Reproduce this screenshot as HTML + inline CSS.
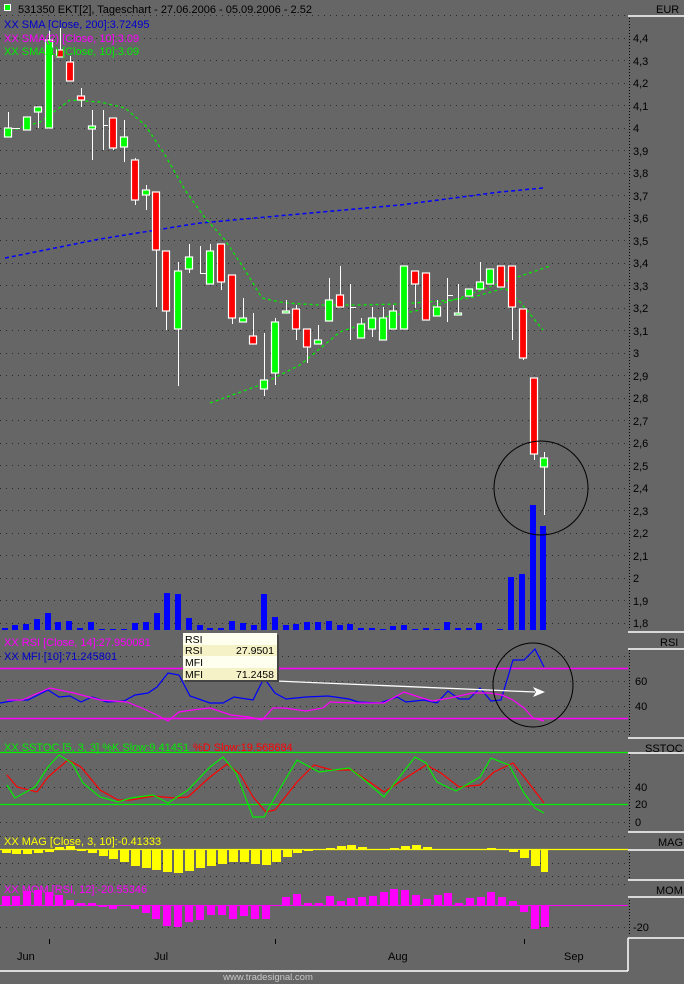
<!DOCTYPE html>
<html><head><meta charset="utf-8"><style>
html,body{margin:0;padding:0;background:#666;}
svg{display:block;font-family:"Liberation Sans",sans-serif;font-size:11px;}
</style></head><body>
<svg width="684" height="984" viewBox="0 0 684 984" xmlns="http://www.w3.org/2000/svg">
<rect width="684" height="984" fill="#666"/>
<g stroke="#2a2a2a" stroke-width="1" stroke-dasharray="1,5">
<path d="M0 15.5H628M0 38.5H628M0 60.5H628M0 83.5H628M0 105.5H628M0 128.5H628M0 150.5H628M0 173.5H628M0 195.5H628M0 218.5H628M0 240.5H628M0 263.5H628M0 285.5H628M0 308.5H628M0 330.5H628M0 353.5H628M0 375.5H628M0 398.5H628M0 420.5H628M0 443.5H628M0 465.5H628M0 488.5H628M0 510.5H628M0 533.5H628M0 555.5H628M0 578.5H628M0 600.5H628M0 623.5H628"/>
<path d="M0 656.5H628M0 681.5H628M0 706.5H628M0 731.5H628"/>
<path d="M0 769.5H628M0 787.5H628M0 822.5H628"/>
<path d="M0 836.5H628M0 863.5H628M0 876.5H628"/>
<path d="M0 884.5H628M0 927.5H628"/>
</g>
<g stroke="#000" stroke-dasharray="1,2"><path d="M629.5 18V630M629.5 650V736M629.5 754V830M629.5 850V878M629.5 897V936"/></g>
<g fill="#000">
<text x="656" y="13">EUR</text>
<text x="633" y="42">4,4</text><text x="633" y="65">4,3</text><text x="633" y="87">4,2</text><text x="633" y="110">4,1</text><text x="633" y="132">4</text><text x="633" y="155">3,9</text><text x="633" y="177">3,8</text><text x="633" y="200">3,7</text><text x="633" y="222">3,6</text><text x="633" y="245">3,5</text><text x="633" y="267">3,4</text><text x="633" y="290">3,3</text><text x="633" y="312">3,2</text><text x="633" y="335">3,1</text><text x="633" y="357">3</text><text x="633" y="380">2,9</text><text x="633" y="402">2,8</text><text x="633" y="425">2,7</text><text x="633" y="447">2,6</text><text x="633" y="470">2,5</text><text x="633" y="492">2,4</text><text x="633" y="515">2,3</text><text x="633" y="537">2,2</text><text x="633" y="560">2,1</text><text x="633" y="582">2</text><text x="633" y="605">1,9</text><text x="633" y="627">1,8</text>
<text x="660" y="646">RSI</text><text x="635" y="685">60</text><text x="635" y="710">40</text>
<text x="645" y="752">SSTOC</text><text x="635" y="791">40</text><text x="635" y="808">20</text><text x="635" y="826">0</text>
<text x="658" y="846">MAG</text>
<text x="656" y="894">MOM</text><text x="633" y="931">-20</text>
</g>
<g stroke="#fff" stroke-width="1.5"><path d="M628 16H684M628 632H684M628 649H684M628 738H684M628 753H684M628 832H684M628 850H684M628 880H684M628 897H684M628 938H684M0 971H628M628 938V971"/></g>
<g fill="#0000ff">
<rect x="2" y="628" width="6" height="2"/><rect x="12" y="625" width="6" height="5"/><rect x="23" y="624" width="6" height="6"/><rect x="34" y="619" width="6" height="11"/><rect x="45" y="613" width="6" height="17"/><rect x="55" y="622" width="6" height="8"/><rect x="66" y="621" width="6" height="9"/><rect x="77" y="628" width="6" height="2"/><rect x="88" y="622" width="6" height="8"/><rect x="99" y="629" width="6" height="1"/><rect x="110" y="629" width="6" height="1"/><rect x="121" y="629" width="6" height="1"/><rect x="132" y="623" width="6" height="7"/><rect x="143" y="622" width="6" height="8"/><rect x="154" y="613" width="6" height="17"/><rect x="164" y="593" width="6" height="37"/><rect x="175" y="594" width="6" height="36"/><rect x="186" y="618" width="6" height="12"/><rect x="197" y="625" width="6" height="5"/><rect x="207" y="628" width="6" height="2"/><rect x="218" y="628" width="6" height="2"/><rect x="229" y="621" width="6" height="9"/><rect x="240" y="623" width="6" height="7"/><rect x="251" y="625" width="6" height="5"/><rect x="261" y="594" width="6" height="36"/><rect x="272" y="617" width="6" height="13"/><rect x="283" y="625" width="6" height="5"/><rect x="293" y="624" width="6" height="6"/><rect x="304" y="622" width="6" height="8"/><rect x="315" y="622" width="6" height="8"/><rect x="326" y="621" width="6" height="9"/><rect x="337" y="625" width="6" height="5"/><rect x="347" y="624" width="6" height="6"/><rect x="358" y="628" width="6" height="2"/><rect x="369" y="628" width="6" height="2"/><rect x="380" y="629" width="6" height="1"/><rect x="390" y="626" width="6" height="4"/><rect x="401" y="625" width="6" height="5"/><rect x="412" y="629" width="6" height="1"/><rect x="423" y="628" width="6" height="2"/><rect x="434" y="629" width="6" height="1"/><rect x="444" y="622" width="6" height="8"/><rect x="455" y="628" width="6" height="2"/><rect x="466" y="628" width="6" height="2"/><rect x="476" y="623" width="6" height="7"/><rect x="497" y="629" width="6" height="1"/><rect x="508" y="577" width="6" height="53"/><rect x="519" y="574" width="6" height="56"/><rect x="530" y="505" width="6" height="125"/><rect x="540" y="526" width="6" height="104"/>
</g>
<path d="M5 258 L100 239 L200 223 L300 214 L400 205 L500 192 L543 188" stroke="#0000ff" stroke-width="1.5" stroke-dasharray="4,3" fill="none"/>
<path d="M10 131 L40 122 L70 100 L100 102 L125 108 L145 125 L165 155 L185 190 L205 218 L225 240 L245 270 L262 298 L285 303 L320 305 L360 305 L400 304 L440 301 L470 298 L505 288 L520 302 L543 330" stroke="#00ee00" stroke-width="1.3" stroke-dasharray="3,3" fill="none"/>
<path d="M210 403 L260 385 L300 365 L340 332 L380 318 L420 310 L460 298 L500 283 L550 266" stroke="#00ee00" stroke-width="1.3" stroke-dasharray="3,3" fill="none"/>
<g stroke="#fff" stroke-width="1">
<path d="M8.5 112V137M27.5 117V130M38.5 107V128M49.5 28V128M60.5 28V57M70.5 56V81M81.5 88V107M92.5 110V160M103.5 110V150M113.5 118V150M124.5 120V162M135.5 158V205M146.5 185V210M156.5 192V307M166.5 251V330M178.5 262V386M189.5 244V273M200.5 246V273M210.5 244V284M221.5 244V290M232.5 275V324M243.5 298V322M253.5 313V344M264.5 333V396M275.5 318V385M286.5 300V313M296.5 305V340M307.5 329V363M318.5 325V344M329.5 278V321M340.5 266V307M350.5 284V340M361.5 318V338M372.5 307V337M383.5 307V340M393.5 305V329M404.5 266V329M415.5 271V308M426.5 273V320M437.5 300V316M447.5 278V322M458.5 284V315M469.5 289V296M480.5 262V289M490.5 269V284M501.5 266V287M512.5 266V340M523.5 309V360M534.5 378V460M544.5 452V515"/>
<path d="M12 128.5H20M200 273.5H206M350 307.5H356M447 295.5H453M103 125.5H108" />
</g>
<g stroke="#fff" stroke-width="1.2">
<g fill="#00ff00">
<rect x="4.5" y="128" width="7" height="9"/><rect x="23.5" y="117" width="7" height="13"/><rect x="34.5" y="107" width="7" height="5"/><rect x="45.5" y="40" width="7" height="88"/><rect x="88.5" y="126" width="7" height="3"/><rect x="120.5" y="137" width="7" height="10"/><rect x="142.5" y="190" width="7" height="5"/><rect x="174.5" y="271" width="7" height="58"/><rect x="185.5" y="257" width="7" height="12"/><rect x="206.5" y="251" width="7" height="33"/><rect x="239.5" y="318" width="7" height="4"/><rect x="260.5" y="380" width="7" height="9"/><rect x="271.5" y="322" width="7" height="51"/><rect x="282.5" y="311" width="7" height="2"/><rect x="314.5" y="340" width="7" height="4"/><rect x="325.5" y="300" width="7" height="21"/><rect x="357.5" y="324" width="7" height="14"/><rect x="368.5" y="318" width="7" height="11"/><rect x="379.5" y="318" width="7" height="22"/><rect x="389.5" y="311" width="7" height="18"/><rect x="400.5" y="266" width="7" height="63"/><rect x="433.5" y="307" width="7" height="9"/><rect x="454.5" y="313" width="7" height="2"/><rect x="465.5" y="289" width="7" height="7"/><rect x="476.5" y="282" width="7" height="7"/><rect x="486.5" y="269" width="7" height="15"/><rect x="540.5" y="458" width="7" height="9"/>
</g>
<g fill="#ff0000">
<rect x="56.5" y="50" width="7" height="7"/><rect x="66.5" y="62" width="7" height="19"/><rect x="77.5" y="96" width="7" height="4"/><rect x="109.5" y="118" width="7" height="30"/><rect x="131.5" y="160" width="7" height="40"/><rect x="152.5" y="192" width="7" height="58"/><rect x="162.5" y="251" width="7" height="60"/><rect x="217.5" y="244" width="7" height="38"/><rect x="228.5" y="275" width="7" height="43"/><rect x="249.5" y="336" width="7" height="8"/><rect x="292.5" y="309" width="7" height="20"/><rect x="303.5" y="329" width="7" height="18"/><rect x="336.5" y="295" width="7" height="12"/><rect x="411.5" y="271" width="7" height="13"/><rect x="422.5" y="273" width="7" height="47"/><rect x="497.5" y="266" width="7" height="21"/><rect x="508.5" y="266" width="7" height="41"/><rect x="519.5" y="309" width="7" height="49"/><rect x="530.5" y="378" width="7" height="76"/>
</g>
</g>
<ellipse cx="541" cy="488" rx="47" ry="47" stroke="#000" fill="none" stroke-width="1"/>
<rect x="4.5" y="4.5" width="6" height="6" fill="#00ff00" stroke="#fff"/>
<text x="18" y="13" fill="#000">531350  EKT[2], Tageschart - 27.06.2006 - 05.09.2006 - 2.52</text>
<text x="4" y="28" fill="#0000cc">XX SMA [Close, 200]:3.72495</text>
<text x="4" y="42" fill="#ff00ff">XX SMA(2) [Close, 10]:3.09</text>
<text x="4" y="55" fill="#00ee00">XX SMA(1) [Close, 10]:3.09</text>
<path d="M0 668.5H628M0 718.5H628" stroke="#ff00ff" stroke-width="1.5"/>
<polyline fill="none" stroke="#0000ff" stroke-width="1.2" points="0,703 17,700 28,700 48,690 59,697 70,696 81,702 92,697 107,702 124,701 135,695 148,693 157,687 168,673 179,675 190,696 210,703 223,703 234,697 253,700 264,678 275,693 286,699 306,697 328,696 349,699 358,702 380,703 397,697 406,702 424,700 437,703 448,691 459,699 469,699 480,688 491,701 501,700 513,660 524,660 535,649 544,667"/>
<polyline fill="none" stroke="#ff00ff" stroke-width="1.2" points="7,700 22,700 50,688 74,693 100,700 127,702 144,709 157,715 168,721 179,712 192,710 210,708 231,715 249,717 262,720 273,708 284,708 306,711 323,708 330,702 354,703 384,703 404,692 419,697 432,701 450,698 472,693 489,693 502,695 513,700 524,708 533,718 544,721"/>
<path d="M276 681 L535 692" stroke="#fff" stroke-width="1.3"/>
<path d="M545 692 L533 687 L536 692 L533 697 Z" fill="#fff"/>
<ellipse cx="533" cy="685" rx="40" ry="42" stroke="#000" fill="none"/>
<text x="4" y="646" fill="#ff00ff">XX RSI [Close, 14]:27.950081</text>
<text x="4" y="660" fill="#0000cc">XX MFI [10]:71.245801</text>
<rect x="185" y="635" width="94" height="47" fill="#444"/>
<rect x="183" y="633" width="94" height="47" fill="#fffff0"/>
<rect x="183" y="645" width="94" height="11" fill="#f6f2c8"/>
<rect x="183" y="668" width="94" height="12" fill="#f6f2c8"/>
<g fill="#000" font-size="10.5"><text x="185" y="643">RSI</text><text x="185" y="654">RSI</text><text x="274" y="654" text-anchor="end">27.9501</text><text x="185" y="666">MFI</text><text x="185" y="678">MFI</text><text x="274" y="678" text-anchor="end">71.2458</text></g>
<path d="M0 752.5H628M0 804.5H628" stroke="#00ee00" stroke-width="1.3"/>
<polyline fill="none" stroke="#ff0000" stroke-width="1.2" points="7,775 17,787 37,792 48,777 68,760 81,767 100,790 118,800 131,800 153,796 175,798 188,797 210,777 227,764 240,774 253,797 266,812 275,810 297,782 314,765 332,770 352,770 371,783 384,792 415,772 426,765 441,773 459,787 480,785 494,772 513,763 528,782 544,803"/>
<polyline fill="none" stroke="#00ee00" stroke-width="1.2" points="7,785 15,798 35,787 48,767 59,755 72,763 83,783 100,797 118,802 131,798 153,795 168,803 188,790 210,767 223,757 236,773 253,817 264,817 275,797 297,760 319,772 349,768 362,778 384,797 415,757 426,763 437,782 456,791 480,777 491,758 509,765 524,793 535,808 544,813"/>
<text x="4" y="751" fill="#00ee00">XX SSTOC [5, 3, 3] %K Slow:9.41451</text>
<text x="193" y="751" fill="#ff0000">%D Slow:19.568684</text>
<path d="M0 849.5H628" stroke="#ffff00" stroke-width="1.3"/>
<g fill="#ffff00">
<rect x="2" y="850" width="9" height="3"/><rect x="12" y="850" width="9" height="4"/><rect x="23" y="850" width="9" height="4"/><rect x="34" y="850" width="9" height="3"/><rect x="45" y="850" width="9" height="2"/><rect x="55" y="847" width="9" height="3"/><rect x="66" y="846" width="9" height="4"/><rect x="77" y="850" width="9" height="1"/><rect x="88" y="850" width="9" height="3"/><rect x="99" y="850" width="9" height="6"/><rect x="109" y="850" width="9" height="9"/><rect x="120" y="850" width="9" height="12"/><rect x="131" y="850" width="9" height="16"/><rect x="142" y="850" width="9" height="18"/><rect x="152" y="850" width="9" height="20"/><rect x="163" y="850" width="9" height="22"/><rect x="174" y="850" width="9" height="23"/><rect x="185" y="850" width="9" height="21"/><rect x="196" y="850" width="9" height="18"/><rect x="207" y="850" width="9" height="16"/><rect x="218" y="850" width="9" height="14"/><rect x="229" y="850" width="9" height="12"/><rect x="240" y="850" width="9" height="12"/><rect x="251" y="850" width="9" height="14"/><rect x="262" y="850" width="9" height="15"/><rect x="272" y="850" width="9" height="12"/><rect x="283" y="850" width="9" height="7"/><rect x="293" y="850" width="9" height="3"/><rect x="304" y="850" width="9" height="1"/><rect x="326" y="848" width="9" height="2"/><rect x="337" y="846" width="9" height="4"/><rect x="347" y="845" width="9" height="5"/><rect x="358" y="847" width="9" height="3"/><rect x="369" y="849" width="9" height="1"/><rect x="390" y="848" width="9" height="2"/><rect x="401" y="846" width="9" height="4"/><rect x="412" y="845" width="9" height="5"/><rect x="423" y="847" width="9" height="3"/><rect x="434" y="849" width="9" height="1"/><rect x="477" y="849" width="9" height="1"/><rect x="487" y="848" width="9" height="2"/><rect x="498" y="849" width="9" height="1"/><rect x="509" y="850" width="9" height="2"/><rect x="520" y="850" width="9" height="8"/><rect x="531" y="850" width="9" height="16"/><rect x="541" y="850" width="7" height="22"/>
</g>
<text x="4" y="845" fill="#ffff00">XX MAG [Close, 3, 10]:-0.41333</text>
<path d="M0 905.5H628" stroke="#ff00ff" stroke-width="1"/>
<g fill="#ff00ff">
<rect x="2" y="896" width="8" height="9"/><rect x="12" y="896" width="8" height="9"/><rect x="23" y="891" width="8" height="14"/><rect x="34" y="890" width="8" height="15"/><rect x="45" y="892" width="8" height="13"/><rect x="55" y="895" width="8" height="10"/><rect x="66" y="900" width="8" height="5"/><rect x="77" y="903" width="8" height="2"/><rect x="88" y="903" width="8" height="2"/><rect x="99" y="905" width="8" height="2"/><rect x="109" y="905" width="8" height="4"/><rect x="131" y="905" width="8" height="4"/><rect x="142" y="905" width="8" height="8"/><rect x="152" y="905" width="8" height="14"/><rect x="163" y="905" width="8" height="21"/><rect x="174" y="905" width="8" height="22"/><rect x="185" y="905" width="8" height="17"/><rect x="196" y="905" width="8" height="15"/><rect x="207" y="905" width="8" height="10"/><rect x="218" y="905" width="8" height="10"/><rect x="229" y="905" width="8" height="14"/><rect x="240" y="905" width="8" height="11"/><rect x="251" y="905" width="8" height="14"/><rect x="262" y="905" width="8" height="14"/><rect x="282" y="897" width="8" height="8"/><rect x="293" y="894" width="8" height="11"/><rect x="304" y="903" width="8" height="2"/><rect x="315" y="903" width="8" height="2"/><rect x="326" y="896" width="8" height="9"/><rect x="337" y="901" width="8" height="4"/><rect x="347" y="898" width="8" height="7"/><rect x="358" y="897" width="8" height="8"/><rect x="369" y="896" width="8" height="9"/><rect x="380" y="892" width="8" height="13"/><rect x="390" y="889" width="8" height="16"/><rect x="401" y="890" width="8" height="15"/><rect x="412" y="895" width="8" height="10"/><rect x="423" y="899" width="8" height="6"/><rect x="434" y="895" width="8" height="10"/><rect x="444" y="893" width="8" height="12"/><rect x="455" y="903" width="8" height="2"/><rect x="466" y="898" width="8" height="7"/><rect x="477" y="897" width="8" height="8"/><rect x="487" y="892" width="8" height="13"/><rect x="498" y="897" width="8" height="8"/><rect x="509" y="901" width="8" height="4"/><rect x="520" y="905" width="8" height="7"/><rect x="531" y="905" width="8" height="24"/><rect x="541" y="905" width="8" height="22"/>
</g>
<text x="4" y="893" fill="#ff00ff">XX MOM [RSI, 12]:-20.55346</text>
<path d="M49.5 939V944M275.5 939V944M524.5 939V944" stroke="#000"/>
<g fill="#000"><text x="17" y="960">Jun</text><text x="154" y="960">Jul</text><text x="388" y="960">Aug</text><text x="564" y="960">Sep</text></g>
<text x="268" y="980" fill="#c8c8c8" font-size="9.5" text-anchor="middle">www.tradesignal.com</text>
</svg>
</body></html>
